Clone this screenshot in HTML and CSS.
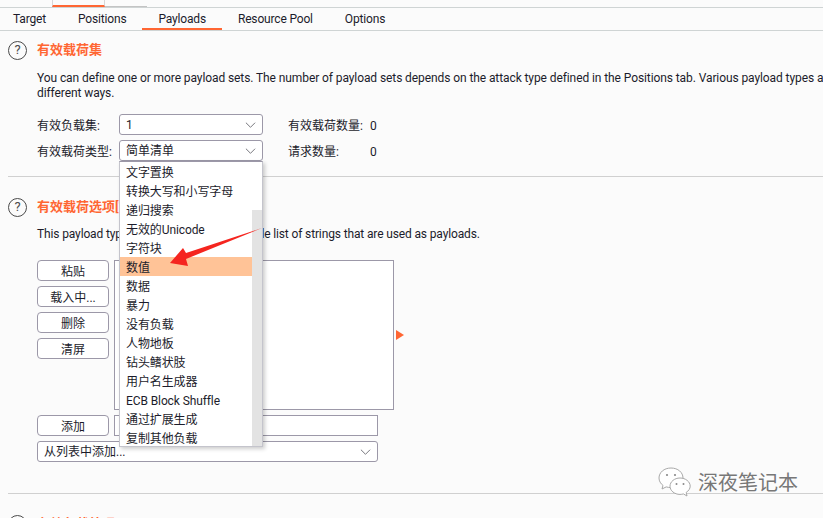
FILE: index.html
```html
<!DOCTYPE html>
<html lang="zh-CN">
<head>
    <meta charset="UTF-8">
    <meta name="viewport" content="width=device-width, initial-scale=1.0">
    <title>Payloads</title>
    <link rel="stylesheet" href="styles.css">
</head>
<body>
    <div class="top-strip">
        <div class="top-tab"></div>
        <div class="top-rest"></div>
    </div>
    <nav class="tabs">
        <a class="tab">Target</a>
        <a class="tab">Positions</a>
        <a class="tab active">Payloads</a>
        <a class="tab">Resource Pool</a>
        <a class="tab">Options</a>
    </nav>

    <section class="section first">
        <div class="section-head">
            <span class="help">?</span>
            <h2>有效载荷集</h2>
        </div>
        <p class="desc">You can define one or more payload sets. The number of payload sets depends on the attack type defined in the Positions tab. Various payload types are available for each payload set, and each payload type can be customized in<br>different ways.</p>
        <div class="form-row">
            <label>有效负载集:</label>
            <div class="select short"><span>1</span><svg class="chev" viewBox="0 0 12 6"><path d="M1 .5 6 5.5 11 .5"/></svg></div>
            <label class="stat-label">有效载荷数量:</label>
            <span class="stat-value">0</span>
        </div>
        <div class="form-row">
            <label>有效载荷类型:</label>
            <div class="select short"><span>简单清单</span><svg class="chev" viewBox="0 0 12 6"><path d="M1 .5 6 5.5 11 .5"/></svg></div>
            <label class="stat-label">请求数量:</label>
            <span class="stat-value">0</span>
        </div>
    </section>

    <section class="section second">
        <div class="section-head">
            <span class="help">?</span>
            <h2>有效载荷选项[简单清单]</h2>
        </div>
        <p class="desc">This payload type lets you configure a simple list of strings that are used as payloads.</p>
        <div class="editor">
            <div class="btn-col">
                <button class="btn">粘贴</button>
                <button class="btn">载入中...</button>
                <button class="btn">删除</button>
                <button class="btn">清屏</button>
            </div>
            <div class="list-box"></div>
            <span class="marker"></span>
        </div>
        <div class="add-row">
            <button class="btn">添加</button>
            <div class="add-input"></div>
        </div>
        <div class="select wide"><span>从列表中添加...</span><svg class="chev" viewBox="0 0 12 6"><path d="M1 .5 6 5.5 11 .5"/></svg></div>
    </section>

    <section class="section third">
        <div class="section-head">
            <span class="help">?</span>
            <h2>有效负载处理</h2>
        </div>
    </section>

    <!-- open dropdown of the payload type select -->
    <div class="dropdown">
        <ul class="options">
            <li>文字置换</li>
            <li>转换大写和小写字母</li>
            <li>递归搜索</li>
            <li>无效的Unicode</li>
            <li>字符块</li>
            <li class="selected">数值</li>
            <li>数据</li>
            <li>暴力</li>
            <li>没有负载</li>
            <li>人物地板</li>
            <li>钻头鳍状肢</li>
            <li>用户名生成器</li>
            <li>ECB Block Shuffle</li>
            <li>通过扩展生成</li>
            <li>复制其他负载</li>
        </ul>
        <div class="scroll"><div class="thumb"></div></div>
    </div>

    <svg class="red-arrow" viewBox="0 0 100 42">
        <path d="M96 4 20 29 17 24 4 39 22 42 20 35Z"/>
    </svg>

    <div class="watermark">
        <svg class="wechat" viewBox="0 0 34 30">
            <path class="bubble" d="M13 1C6 1 1 5.500 1 11c0 3 1.600 5.600 4 7.400L4 22l4.200-2.100c1.500.4 3.100.7 4.800.7 5.500 0 12-4 12-9.600C25 5.500 20 1 13 1Z"/>
            <path class="bubble" d="M22 11c-5.500 0-10 3.700-10 8.200s4.500 8.200 10 8.200c1.200 0 2.400-.2 3.400-.5L29 29l-.8-3.600c2.400-1.500 4-3.800 4-6.200C32.200 14.700 27.500 11 22 11Z"/>
            <circle cx="9" cy="8" r="1.100"/>
            <circle cx="17" cy="8" r="1.100"/>
            <circle cx="18.500" cy="17" r="1"/>
            <circle cx="25.500" cy="17" r="1"/>
        </svg>
        <span>深夜笔记本</span>
    </div>
</body>
</html>
```

FILE: styles.css
```css
* {
    box-sizing: border-box;
}
html, body {
    height: 518px;
    overflow: hidden;
}
body {
    position: relative;
    margin: 0;
    background-color: #fbfbfb;
    color: #1c1c2b;
    font-family: Roboto, "Noto Sans CJK SC", sans-serif;
    font-size: 12px;
    line-height: 15px;
}
.top-strip {
    display: flex;
    height: 8px;
    border-bottom: 1px solid #cfd4d4;
}
.top-tab {
    width: 53px;
    height: 7px;
    margin-left: 52px;
    border-left: 1px solid #d8d8d8;
    border-right: 1px solid #d8d8d8;
    border-bottom: 2px solid #ff6633;
}
.top-rest {
    width: 42px;
    height: 7px;
    border-bottom: 1px solid #c4c4c4;
}
.tabs {
    display: flex;
    height: 23px;
    margin-left: -3px;
    border-bottom: 1px solid #cfd4d4;
    letter-spacing: -0.17px;
}
.tab {
    height: 22px;
    padding: 4px 16px 0;
    white-space: nowrap;
}
.tab.active {
    border-bottom: 2px solid #ff6633;
}
.section {
    margin-left: 8px;
    white-space: nowrap;
}
.first {
    padding: 9px 0 16px;
    border-bottom: 1px solid #d0d0d0;
}
.second {
    padding: 20px 0 31px;
    border-bottom: 1px solid #d0d0d0;
}
.third {
    padding-top: 20px;
}
.section-head {
    display: flex;
    align-items: center;
    gap: 10px;
    height: 20px;
}
.section-head h2 {
    margin: -2px 0 0;
    color: #ff6633;
    font-size: 13px;
    font-weight: bold;
}
.help {
    width: 19px;
    height: 19px;
    border: 1.500px solid #4a4a4a;
    border-radius: 50%;
    color: #4a4a4a;
    font-size: 13px;
    line-height: 16px;
    text-align: center;
}
.desc {
    margin: 10px 0 0 29px;
    padding-top: 1px;
    letter-spacing: -0.09px;
}
.second .desc {
    margin-top: 9px;
    letter-spacing: -0.135px;
}
.form-row {
    display: flex;
    align-items: center;
    height: 20px;
    margin: 13px 0 6px 29px;
}
.form-row + .form-row {
    margin-top: 6px;
    margin-bottom: 0;
}
.form-row label {
    width: 82px;
    padding-top: 4px;
}
.form-row .select {
    margin-top: 1px;
}
.form-row .stat-label {
    width: 82px;
    margin-left: 25px;
}
.stat-value {
    padding-top: 4px;
}
.select {
    display: flex;
    align-items: center;
    justify-content: space-between;
    height: 21px;
    padding: 0 6px;
    border: 1px solid #9c98a8;
    border-radius: 3px;
    background-color: #fff;
}
.select span {
    padding-top: 2px;
}
.select.short {
    width: 144px;
}
.select.wide {
    width: 341px;
    margin: 5px 0 0 29px;
}
.chev {
    width: 11px;
    height: 6px;
    fill: none;
    stroke: #6a6a72;
    stroke-width: 1;
}
.editor {
    display: flex;
    gap: 5px;
    margin: 18px 0 0 29px;
}
.btn-col {
    display: flex;
    flex-direction: column;
    gap: 5px;
    width: 72px;
}
.btn {
    width: 72px;
    height: 21px;
    padding: 3px 0 0;
    border: 1px solid #9c98a8;
    border-radius: 4px;
    background-color: #fff;
    color: inherit;
    font: inherit;
}
.list-box {
    width: 280px;
    height: 150px;
    border: 1px solid #9c98a8;
    background-color: #fff;
}
.marker {
    align-self: center;
    width: 0;
    height: 0;
    margin-left: -3px;
    border-top: 5px solid transparent;
    border-bottom: 5px solid transparent;
    border-left: 8px solid #ff6633;
}
.add-row {
    display: flex;
    gap: 5px;
    margin: 5px 0 0 29px;
}
.add-input {
    width: 264px;
    height: 21px;
    border: 1px solid #9c98a8;
    background-color: #fff;
}
.dropdown {
    position: absolute;
    left: 119px;
    top: 161px;
    display: flex;
    width: 144px;
    height: 286px;
    border: 1px solid #c4c4cc;
    border-top-color: #9c98a8;
    background-color: #fff;
    box-shadow: 2px 2px 4px rgba(0, 0, 0, 0.2);
}
.options {
    width: 132px;
    margin: 0;
    padding: 0;
    list-style: none;
}
.options li {
    height: 19px;
    padding: 4px 6px 0;
    letter-spacing: -0.1px;
}
.options .selected {
    background-color: #ffc397;
}
.scroll {
    width: 10px;
    padding-top: 48px;
}
.thumb {
    height: 100%;
    background-color: #e3e3e3;
}
.red-arrow {
    position: absolute;
    left: 166px;
    top: 224px;
    width: 100px;
    height: 42px;
    fill: #f5251f;
}
.watermark {
    position: absolute;
    left: 658px;
    top: 467px;
    display: flex;
    align-items: center;
    gap: 6px;
    color: #777;
    font-family: "Noto Sans CJK SC", sans-serif;
    font-size: 20px;
    line-height: 30px;
    text-shadow: 0 0 2px #fff;
}
.wechat {
    width: 34px;
    height: 30px;
    fill: #8a8a8a;
}
.wechat .bubble {
    fill: #fff;
    stroke: #a8a8a8;
    stroke-width: 1;
}
```
